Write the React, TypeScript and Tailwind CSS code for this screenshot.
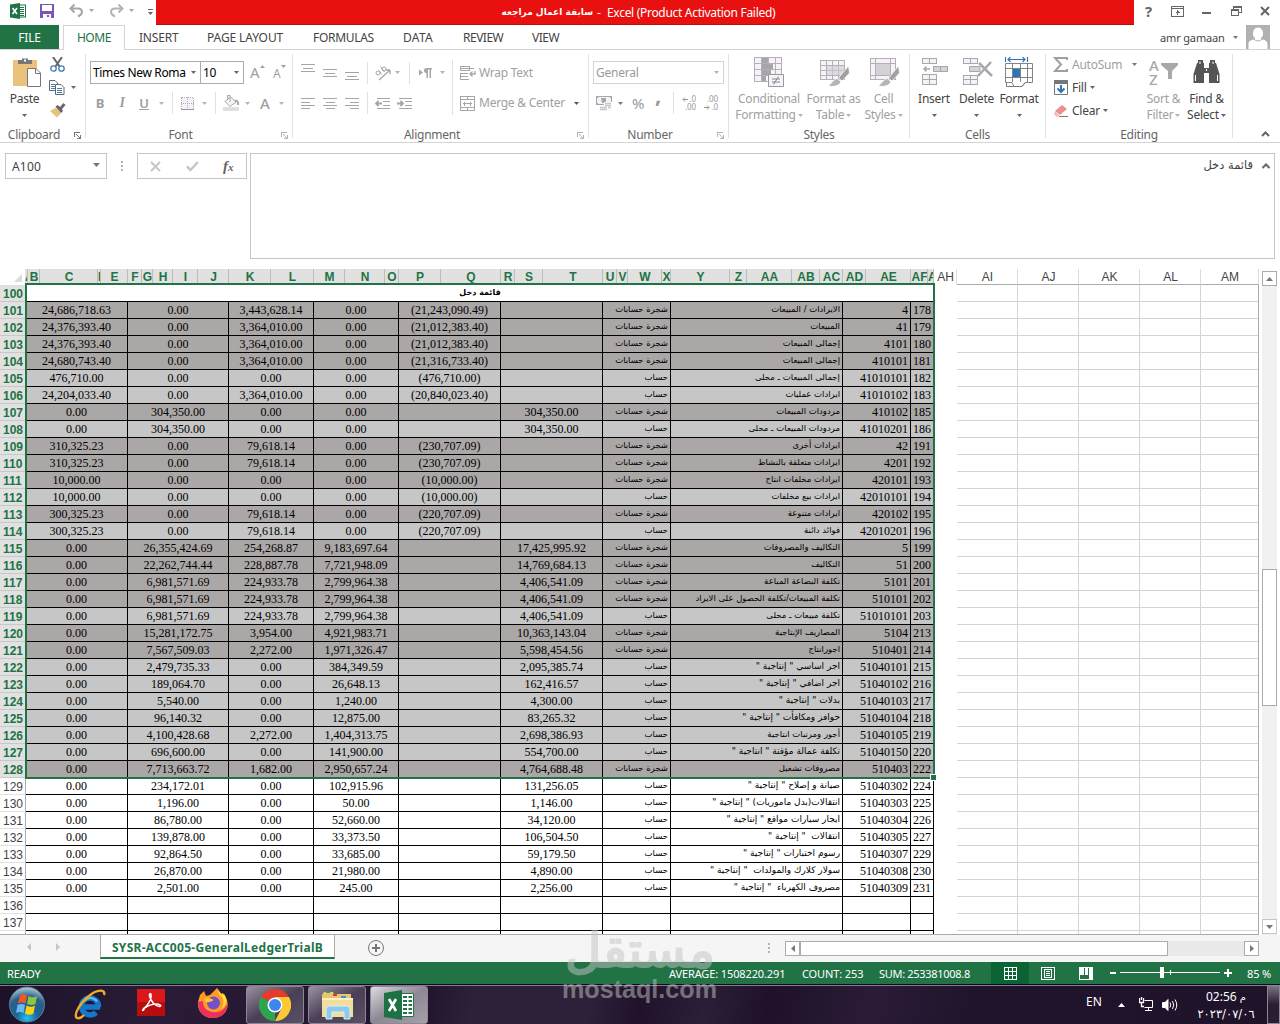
import type { ReactNode } from 'react';
import clsx from 'clsx';

type Entry = [string, string, string, string, string, string, boolean, string, string, string];

// C, H, K, M, P, T, is tree account, name, code, serial
const ENTRIES: Entry[] = [
  ['24,686,718.63', '0.00', '3,443,628.14', '0.00', '(21,243,090.49)', '', true, 'الايرادات / المبيعات', '4', '178'],
  ['24,376,393.40', '0.00', '3,364,010.00', '0.00', '(21,012,383.40)', '', true, 'المبيعات', '41', '179'],
  ['24,376,393.40', '0.00', '3,364,010.00', '0.00', '(21,012,383.40)', '', true, 'إجمالى المبيعات', '4101', '180'],
  ['24,680,743.40', '0.00', '3,364,010.00', '0.00', '(21,316,733.40)', '', true, 'إجمالى المبيعات', '410101', '181'],
  ['476,710.00', '0.00', '0.00', '0.00', '(476,710.00)', '', false, 'إجمالى المبيعات ـ محلى', '41010101', '182'],
  ['24,204,033.40', '0.00', '3,364,010.00', '0.00', '(20,840,023.40)', '', false, 'ايرادات عمليات', '41010102', '183'],
  ['0.00', '304,350.00', '0.00', '0.00', '', '304,350.00', true, 'مردودات المبيعات', '410102', '185'],
  ['0.00', '304,350.00', '0.00', '0.00', '', '304,350.00', false, 'مردودات المبيعات ـ محلى', '41010201', '186'],
  ['310,325.23', '0.00', '79,618.14', '0.00', '(230,707.09)', '', true, 'ايرادات أخرى', '42', '191'],
  ['310,325.23', '0.00', '79,618.14', '0.00', '(230,707.09)', '', true, 'ايرادات متعلقة بالنشاط', '4201', '192'],
  ['10,000.00', '0.00', '0.00', '0.00', '(10,000.00)', '', true, 'ايرادات مخلفات انتاج', '420101', '193'],
  ['10,000.00', '0.00', '0.00', '0.00', '(10,000.00)', '', false, 'ايرادات بيع مخلفات', '42010101', '194'],
  ['300,325.23', '0.00', '79,618.14', '0.00', '(220,707.09)', '', true, 'ايرادات متنوعة', '420102', '195'],
  ['300,325.23', '0.00', '79,618.14', '0.00', '(220,707.09)', '', false, 'فوائد دائنة', '42010201', '196'],
  ['0.00', '26,355,424.69', '254,268.87', '9,183,697.64', '', '17,425,995.92', true, 'التكاليف والمصروفات', '5', '199'],
  ['0.00', '22,262,744.44', '228,887.78', '7,721,948.09', '', '14,769,684.13', true, 'التكاليف', '51', '200'],
  ['0.00', '6,981,571.69', '224,933.78', '2,799,964.38', '', '4,406,541.09', true, 'تكلفة البضاعة المباعة', '5101', '201'],
  ['0.00', '6,981,571.69', '224,933.78', '2,799,964.38', '', '4,406,541.09', true, 'تكلفة المبيعات/تكلفة الحصول على الايراد', '510101', '202'],
  ['0.00', '6,981,571.69', '224,933.78', '2,799,964.38', '', '4,406,541.09', false, 'تكلفة مبيعات ـ محلى', '51010101', '203'],
  ['0.00', '15,281,172.75', '3,954.00', '4,921,983.71', '', '10,363,143.04', true, 'المصاريف الإنتاجية', '5104', '213'],
  ['0.00', '7,567,509.03', '2,272.00', '1,971,326.47', '', '5,598,454.56', true, 'اجورانتاج', '510401', '214'],
  ['0.00', '2,479,735.33', '0.00', '384,349.59', '', '2,095,385.74', false, 'اجر اساسي " إنتاجية "', '51040101', '215'],
  ['0.00', '189,064.70', '0.00', '26,648.13', '', '162,416.57', false, 'اجر اضافي " إنتاجية "', '51040102', '216'],
  ['0.00', '5,540.00', '0.00', '1,240.00', '', '4,300.00', false, 'بدلات " إنتاجية "', '51040103', '217'],
  ['0.00', '96,140.32', '0.00', '12,875.00', '', '83,265.32', false, 'حوافز ومكافأت " إنتاجية "', '51040104', '218'],
  ['0.00', '4,100,428.68', '2,272.00', '1,404,313.75', '', '2,698,386.93', false, 'أجور ومرتبات انتاجية', '51040105', '219'],
  ['0.00', '696,600.00', '0.00', '141,900.00', '', '554,700.00', false, 'تكلفة عمالة مؤقتة " انتاجية "', '51040150', '220'],
  ['0.00', '7,713,663.72', '1,682.00', '2,950,657.24', '', '4,764,688.48', true, 'مصروفات تشغيل', '510403', '222'],
  ['0.00', '234,172.01', '0.00', '102,915.96', '', '131,256.05', false, 'صيانة و إصلاح " إنتاجية "', '51040302', '224'],
  ['0.00', '1,196.00', '0.00', '50.00', '', '1,146.00', false, 'انتقالات(بدل ماموريات) " إنتاجية "', '51040303', '225'],
  ['0.00', '86,780.00', '0.00', '52,660.00', '', '34,120.00', false, 'ايجار سيارات مواقع " إنتاجية "', '51040304', '226'],
  ['0.00', '139,878.00', '0.00', '33,373.50', '', '106,504.50', false, 'انتقالات  " إنتاجية "', '51040305', '227'],
  ['0.00', '92,864.50', '0.00', '33,685.00', '', '59,179.50', false, 'رسوم اختبارات " إنتاجية "', '51040307', '229'],
  ['0.00', '26,870.00', '0.00', '21,980.00', '', '4,890.00', false, 'سولار كلارك والمولدات  " إنتاجية "', '51040308', '230'],
  ['0.00', '2,501.00', '0.00', '245.00', '', '2,256.00', false, 'مصروف الكهرباء  " إنتاجية "', '51040309', '231'],
];

const COLUMNS: [string, number][] = [
  ['A', 3], ['B', 12], ['C', 58], ['D', 3], ['E', 27], ['F', 14], ['G', 11], ['H', 20], ['I', 25], ['J', 31],
  ['K', 42], ['L', 43], ['M', 31], ['N', 40], ['O', 14], ['P', 42], ['Q', 60], ['R', 14], ['S', 28], ['T', 60],
  ['U', 14], ['V', 11], ['W', 34], ['X', 9], ['Y', 59], ['Z', 17], ['AA', 45], ['AB', 28], ['AC', 23],
  ['AD', 23], ['AE', 45], ['AF', 17], ['AG', 6], ['AH', 23], ['AI', 61], ['AJ', 61], ['AK', 61], ['AL', 61], ['AM', 58],
];

const ARABIC = 'font-["DejaVu_Sans",sans-serif]';

function Arrow({ className = 'text-[#777]' }: { className?: string }) {
  return (
    <svg width="5" height="3" viewBox="0 0 5 3" className={clsx('shrink-0', className)}>
      <path d="M0 0H5L2.500 3Z" fill="currentColor" />
    </svg>
  );
}

/* ---------- Title bar ---------- */

function ExcelMark() {
  return (
    <svg width="16" height="16" viewBox="0 0 16 16" className="ml-[10px]">
      <rect x="8" y="2" width="7.500" height="12" fill="#fff" stroke="#217346" />
      <path d="M10 4.500h4M10 6.500h4M10 8.500h4M10 10.500h4M10 12.500h4" stroke="#217346" />
      <path d="M0 1.500L10 0V16L0 14.500Z" fill="#217346" />
      <path d="M2.500 5L7 11M7 5L2.500 11" stroke="#fff" strokeWidth="1.600" />
    </svg>
  );
}

function TitleBar() {
  return (
    <div className="flex h-[25px]">
      <div className="flex w-[156px] items-start pt-[3px]">
        <ExcelMark />
        <svg width="14" height="14" viewBox="0 0 14 14" className="mt-px ml-[14px]" shapeRendering="crispEdges">
          <path d="M0 0H14V14H0Z" fill="#7a57b8" />
          <path d="M2 1H12V7H2Z" fill="#fff" />
          <path d="M3 10H11V14H3Z" fill="#fff" />
          <path d="M7 11H9V13H7Z" fill="#7a57b8" />
        </svg>
        <svg width="15" height="14" viewBox="0 0 15 14" className="mt-px ml-[15px]" fill="none" stroke="#a6a6a6" strokeWidth="2">
          <path d="M5.500 0.500L1.500 4.500L5.500 8.500M1.500 4.500H9C12 4.500 13 6.500 13 8C13 9.500 12 11 9 12.500" />
        </svg>
        <Arrow className="mt-[6px] ml-[5px] text-[#a6a6a6]" />
        <svg width="15" height="14" viewBox="0 0 15 14" className="mt-px ml-[15px]" fill="none" stroke="#b4b4b4" strokeWidth="2">
          <path d="M9.500 0.500L13.500 4.500L9.500 8.500M13.500 4.500H6C3 4.500 2 6.500 2 8C2 9.500 3 11 6 12.500" />
        </svg>
        <Arrow className="mt-[6px] ml-[5px] text-[#a6a6a6]" />
        <svg width="5" height="6" viewBox="0 0 5 6" className="mt-[6px] ml-[14px]">
          <path d="M0 0H5V1H0ZM0 3H5L2.500 6Z" fill="#666" />
        </svg>
      </div>
      <div className="flex w-[978px] items-center border-b border-[#b80f0f] bg-[#e91010] pt-px text-[12px] leading-none whitespace-pre text-white">
        <span dir="rtl" className={clsx('ml-[345px] w-[92px] text-[9px] font-bold', ARABIC)}>
          سابقة اعمال مراجعه
        </span>
        <span className="ml-[4px] w-[10px]">-</span>
        <span className="tracking-[-0.3px]">Excel (Product Activation Failed)</span>
      </div>
      <div className="flex flex-1 items-start pt-[5px] text-[#666]">
        <span className="ml-[10px] w-[9px] text-center text-[15px] leading-[12px] font-bold">?</span>
        <svg width="13" height="11" viewBox="0 0 13 11" className="mt-px ml-[18px]" fill="none" stroke="#666" shapeRendering="crispEdges">
          <path d="M0.500 0.500H12.500V10.500H0.500ZM0.500 2.500H12.500M6.500 4V9M4.500 6.500H8.500M5.500 5.500H7.500" />
        </svg>
        <svg width="9" height="2" className="mt-[7px] ml-[18px]">
          <rect width="9" height="2" fill="#666" />
        </svg>
        <svg width="11" height="10" viewBox="0 0 11 10" className="mt-px ml-[20px]" fill="none" stroke="#666" shapeRendering="crispEdges">
          <path d="M0.500 3.500H7.500V9.500H0.500ZM0.500 4.500H7.500M2.500 3V0.500H10.500V6.500H8M2.500 1.500H10.500" />
        </svg>
        <svg width="10" height="10" viewBox="0 0 10 10" className="mt-px ml-[18px]" stroke="#666" strokeWidth="2">
          <path d="M1 1L9 9M9 1L1 9" />
        </svg>
      </div>
    </div>
  );
}

/* ---------- Ribbon tabs ---------- */

function RibbonTabs() {
  return (
    <div className="flex h-[25px] border-b border-[#d4d4d4] text-[12px] leading-[26px] tracking-[-0.2px] whitespace-nowrap text-[#444]">
      <div className="w-[59px] bg-[#217346] text-center text-white">FILE</div>
      <div className="ml-[4px] h-[25px] w-[62px] border border-b-0 border-[#d4d4d4] bg-white text-center leading-[24px] tracking-[-0.4px] text-[#217346]">
        HOME
      </div>
      <div className="ml-[14px] w-[68px]">INSERT</div>
      <div className="w-[106px] tracking-[-0.1px]">PAGE LAYOUT</div>
      <div className="w-[90px] tracking-[-0.3px]">FORMULAS</div>
      <div className="w-[60px] tracking-[0.3px]">DATA</div>
      <div className="w-[69px] tracking-[-0.5px]">REVIEW</div>
      <div className="w-[628px] tracking-[-0.5px]">VIEW</div>
      <div className="w-[73px] text-[11px] tracking-[-0.15px]">amr gamaan</div>
      <div className="flex w-[13px] items-center">
        <Arrow />
      </div>
      <svg width="24" height="24" viewBox="0 0 24 24">
        <rect width="24" height="24" fill="#b1b1b1" />
        <path d="M12 2.500a5 6 0 0 1 3 10.800V14c4 1 6.500 2 6.500 5v5H2.500V19c0-3 2.500-4 6.500-5v-0.700a5 6 0 0 1 3-10.800Z" fill="#fff" />
        <path d="M7 13.500Q12 18.500 17 13.500" fill="none" stroke="#b1b1b1" />
      </svg>
    </div>
  );
}

/* ---------- Ribbon ---------- */

interface GroupProps {
  label: string;
  width: string;
  launcher?: string;
  children: ReactNode;
}

function Group({ label, width, launcher, children }: GroupProps) {
  return (
    <>
      <div className={clsx('flex h-[92px] shrink-0 flex-col', width)}>
        <div className="flex h-[76px]">{children}</div>
        <div className="flex h-[16px] items-center text-[#666]">
          <span className="flex-1 pt-px text-center">{label}</span>
          {launcher && (
            <svg width="7" height="7" viewBox="0 0 7 7" className={clsx('mt-[2px] mr-[4px] ml-[6px]', launcher)} fill="none" stroke="currentColor" shapeRendering="crispEdges">
              <path d="M0.500 5V0.500H6M2.500 2.500L6 6M6.500 3V6.500H3" />
            </svg>
          )}
        </div>
      </div>
      <div className="mt-[4px] h-[84px] w-px shrink-0 bg-[#e1e1e1]" />
    </>
  );
}

interface BigButtonProps {
  width: string;
  icon: ReactNode;
  lines: string[];
  muted?: boolean;
  inlineArrow?: boolean;
}

function BigButton({ width, icon, lines, muted, inlineArrow }: BigButtonProps) {
  return (
    <div className={clsx('flex shrink-0 flex-col items-center pt-[7px] leading-[16px] whitespace-nowrap', width, muted ? 'text-[#a0a0a0]' : 'text-[#444]')}>
      <div className="flex h-[34px] items-start">{icon}</div>
      <span>{lines[0]}</span>
      <span className="flex h-[16px] items-center gap-[2px]">
        {inlineArrow && lines[1]}
        <Arrow className={muted ? 'text-[#b4b4b4]' : 'text-[#666]'} />
      </span>
    </div>
  );
}

const Divider = ({ className }: { className: string }) => <div className={clsx('w-px shrink-0 bg-[#e1e1e1]', className)} />;

const ALIGN = [
  'M0 0.500H14M2 4.500H12M0 7.500H14',
  'M0 0.500H14M0 4.500H9M0 7.500H14M0 10.500H9',
  'M0 0.500H14M2.500 4.500H11.500M0 7.500H14M2.500 10.500H11.500',
  'M0 0.500H14M5 4.500H14M0 7.500H14M5 10.500H14',
];

function AlignIcon({ d, className }: { d: string; className?: string }) {
  return (
    <svg width="14" height="11" viewBox="0 0 14 11" className={clsx('shrink-0', className)} stroke="#a6a6a6" shapeRendering="crispEdges">
      <path d={d} />
    </svg>
  );
}

function IndentIcon({ right, className }: { right?: boolean; className?: string }) {
  return (
    <svg width="16" height="11" viewBox="0 0 16 11" className={clsx('shrink-0', className)} stroke="#a6a6a6" fill="none">
      <path d="M2 0.500H15M8 3.500H15M8 7.500H15M2 10.500H15" shapeRendering="crispEdges" />
      <path d={right ? 'M0 5.500H6M3.500 3L6 5.500L3.500 8' : 'M7 5.500H1M3.500 3L1 5.500L3.500 8'} strokeWidth="1.800" />
    </svg>
  );
}

function ClipboardGroup() {
  return (
    <Group label="Clipboard" width="w-[85px]" launcher="text-[#777]">
      <BigButton
        width="w-[49px]"
        lines={['Paste']}
        icon={
          <svg width="28" height="31" viewBox="0 0 28 31" className="ml-[4px]">
            <path d="M0 3H24V29H0Z" fill="#eac17d" />
            <path d="M5 3H9V1.500H15V3H19V7H5Z" fill="#777" />
            <path d="M11 2.500H13V4.500H11Z" fill="#fff" />
            <path d="M14.500 11.500H23L27.500 16V29.500H14.500Z" fill="#fff" stroke="#777" />
            <path d="M22.500 11.500V16.500H27.500" fill="none" stroke="#777" />
          </svg>
        }
      />
      <div className="flex flex-col">
        <svg width="15" height="15" viewBox="0 0 15 15" className="mt-[7px] ml-px" fill="none">
          <path d="M3 0L9.500 9.500M12 0L5.500 9.500" stroke="#666" strokeWidth="2" />
          <circle cx="3.500" cy="11.500" r="2.700" stroke="#3f7fb5" strokeWidth="1.300" />
          <circle cx="11.500" cy="11.500" r="2.700" stroke="#3f7fb5" strokeWidth="1.300" />
        </svg>
        <div className="mt-[8px] flex items-center">
          <svg width="16" height="15" viewBox="0 0 16 15" fill="#fff" stroke="#666">
            <path d="M0.500 0.500H6L8.500 3V10.500H0.500Z" />
            <path d="M2 4.500H6M2 6.500H6M2 8.500H6" stroke="#3f7fb5" />
            <path d="M6.500 4.500H12L15 7.500V14.500H6.500Z" />
            <path d="M8 8.500H13M8 10.500H13M8 12.500H13" stroke="#3f7fb5" />
          </svg>
          <Arrow className="ml-[6px] text-[#666]" />
        </div>
        <svg width="17" height="16" viewBox="0 0 17 16" className="mt-[7px]">
          <path d="M1 9L7 5.500L12 11L8 15.500Z" fill="#eac17d" />
          <path d="M6.500 4.500L8.500 3L11 5L14.500 1L16.500 3L13 7L14 9L12 11Z" fill="#666" />
        </svg>
      </div>
    </Group>
  );
}

function FontGroup() {
  return (
    <Group label="Font" width="w-[206px]" launcher="text-[#b4b4b4]">
      <div className="pt-[11px] pl-[4px] text-[#a0a0a0]">
        <div className="flex h-[23px] items-center">
          <div className="flex h-[23px] w-[111px] items-center justify-between border border-[#ababab] pr-[4px] pl-[2px] tracking-[-0.35px] whitespace-nowrap text-black">
            <span>Times New Roma</span>
            <Arrow className="text-[#666]" />
          </div>
          <div className="flex h-[23px] w-[43px] items-center justify-between border border-l-0 border-[#ababab] pr-[4px] pl-[2px] text-black">
            10
            <Arrow className="text-[#666]" />
          </div>
          <span className="ml-[6px] w-[10px] text-[15px]">A</span>
          <svg width="5" height="3" viewBox="0 0 5 3" className="mb-[12px]">
            <path d="M0 3H5L2.500 0Z" fill="#a0a0a0" />
          </svg>
          <span className="ml-[8px] w-[8px] pt-[2px] text-[12px]">A</span>
          <Arrow className="mb-[12px] text-[#a0a0a0]" />
        </div>
        <div className="mt-[8px] flex h-[22px] items-center">
          <span className="w-[20px] text-center text-[13px] font-bold">B</span>
          <span className="ml-[2px] w-[20px] text-center font-['Liberation_Serif',serif] text-[14px] font-bold italic">I</span>
          <span className="ml-[2px] w-[20px] text-center text-[13px] font-semibold underline">U</span>
          <Arrow className="ml-[5px] text-[#b4b4b4]" />
          <Divider className="ml-[8px] h-[22px]" />
          <svg width="13" height="13" viewBox="0 0 13 13" className="ml-[8px]" stroke="#b0a8b4" fill="#f7f1f9" shapeRendering="crispEdges">
            <path d="M0.500 0.500H12.500V12H0.500ZM6.500 0V12M0 6.500H13" strokeDasharray="1 1" />
            <path d="M0 12.500H13" stroke="#999" />
          </svg>
          <Arrow className="ml-[8px] text-[#b4b4b4]" />
          <Divider className="ml-[8px] h-[22px]" />
          <svg width="17" height="16" viewBox="0 0 17 16" className="ml-[7px]" fill="none" stroke="#a6a6a6">
            <path d="M7.500 2L13 7L7 11.500L2 6.500ZM7 7V0.500H4.500V5" fill="#f7f1f9" />
            <path d="M12 5.500C14.500 5.500 15.500 7.500 15 10" strokeWidth="2" />
            <path d="M0 14H16" stroke="#dfdfdf" strokeWidth="4" />
          </svg>
          <Arrow className="ml-[5px] text-[#b4b4b4]" />
          <span className="ml-[10px] w-[11px] text-[15px] font-medium">A</span>
          <Arrow className="ml-[8px] text-[#b4b4b4]" />
        </div>
      </div>
    </Group>
  );
}

function AlignmentGroup() {
  return (
    <Group label="Alignment" width="w-[295px]" launcher="text-[#b4b4b4]">
      <div className="w-[159px] pt-[11px] pl-[8px]">
        <div className="flex h-[23px] items-center">
          <AlignIcon d={ALIGN[0]} className="mb-[6px]" />
          <AlignIcon d={ALIGN[0]} className="mt-[3px] ml-[8px]" />
          <AlignIcon d={ALIGN[0]} className="mt-[10px] ml-[8px]" />
          <Divider className="ml-[8px] h-[22px]" />
          <svg width="17" height="16" viewBox="0 0 17 16" className="ml-[7px]" fill="none" stroke="#a6a6a6">
            <path d="M4 15L15 5M15 5V9M15 5H11" strokeWidth="1.300" />
            <circle cx="3" cy="8" r="2" />
            <path d="M4 5.500L6.500 9.500M5.500 1.500L9.500 7" />
            <circle cx="9" cy="4" r="2" />
          </svg>
          <Arrow className="ml-[3px] text-[#b4b4b4]" />
          <Divider className="ml-[9px] h-[22px]" />
          <svg width="14" height="10" viewBox="0 0 14 10" className="ml-[9px]">
            <path d="M0 1.500L4 4.500L0 7.500ZM13 0H7.500a2.500 2.500 0 0 0 0 5V10H9V1.500H10.500V10H12V1.500H13Z" fill="#a6a6a6" />
          </svg>
          <Arrow className="ml-[7px] text-[#b4b4b4]" />
        </div>
        <div className="mt-[8px] flex h-[22px] items-center">
          <AlignIcon d={ALIGN[1]} />
          <AlignIcon d={ALIGN[2]} className="ml-[8px]" />
          <AlignIcon d={ALIGN[3]} className="ml-[8px]" />
          <Divider className="ml-[8px] h-[22px]" />
          <IndentIcon className="ml-[7px]" />
          <IndentIcon right className="ml-[6px]" />
        </div>
      </div>
      <Divider className="mt-[10px] h-[55px]" />
      <div className="pt-[11px] pl-[7px] whitespace-nowrap text-[#a0a0a0]">
        <div className="flex h-[23px] items-center">
          <svg width="16" height="16" viewBox="0 0 16 16" fill="none" stroke="#a6a6a6">
            <path d="M0.500 1.500H9.500V5.500H0.500ZM0 3.500H14M0 8.500H8M0 11.500H8M0 14.500H9M0.500 8V15" shapeRendering="crispEdges" />
            <path d="M15 6V9H10.500M12.500 6.500L10 9L12.500 11.500" strokeWidth="1.300" />
          </svg>
          <span className="ml-[3px]">Wrap Text</span>
        </div>
        <div className="mt-[8px] flex h-[22px] items-center">
          <svg width="15" height="15" viewBox="0 0 15 15" fill="none" stroke="#a6a6a6" shapeRendering="crispEdges">
            <path d="M0.500 0.500H14.500V14.500H0.500ZM0 3.500H15M0 11.500H15M7.500 0V3M7.500 12V15M3 7.500H12M4.500 5.500V9.500M10.500 5.500V9.500" />
          </svg>
          <span className="ml-[4px] w-[95px]">Merge &amp; Center</span>
          <Arrow className="text-[#555]" />
        </div>
      </div>
    </Group>
  );
}

function DecimalIcon({ top, bottom, flip, className }: { top: string; bottom: string; flip?: boolean; className: string }) {
  return (
    <div className={clsx('flex w-[15px] shrink-0 flex-col text-[8px] leading-[8px] tracking-[-0.1px]', className)}>
      <span className="flex items-center justify-end gap-px">
        {!flip && (
          <svg width="6" height="5" viewBox="0 0 6 5" fill="none" stroke="#999">
            <path d="M6 2.500H1M3 0.500L1 2.500L3 4.500" />
          </svg>
        )}
        {top}
      </span>
      <span className="flex items-center justify-end gap-px">
        {flip && (
          <svg width="6" height="5" viewBox="0 0 6 5" fill="none" stroke="#999">
            <path d="M0 2.500H5M3 0.500L5 2.500L3 4.500" />
          </svg>
        )}
        {bottom}
      </span>
    </div>
  );
}

function NumberGroup() {
  return (
    <Group label="Number" width="w-[139px]" launcher="text-[#b4b4b4]">
      <div className="pt-[11px] pl-[4px] text-[#999]">
        <div className="flex h-[23px] w-[131px] items-center justify-between border border-[#d4d4d4] pr-[4px] pl-[2px]">
          General
          <Arrow className="text-[#b4b4b4]" />
        </div>
        <div className="mt-[8px] flex h-[22px] items-center">
          <svg width="16" height="15" viewBox="0 0 16 15" className="ml-[3px]">
            <rect x="0.500" y="0.500" width="15" height="8" fill="#f7f1f9" stroke="#a6a6a6" />
            <path d="M0 0H4L0 3ZM16 0H12L16 3ZM0 9H4L0 6ZM5 2H10V7H6Z" fill="#a6a6a6" />
            <path d="M8 6H16V15H4V10H8Z" fill="#fff" />
            <path d="M9 7.500H15M9 9.500H15M4 11.500H11M12 11.500H15M4 13.500H11" stroke="#c8c4ca" strokeWidth="1.500" />
          </svg>
          <Arrow className="ml-[6px] text-[#777]" />
          <span className="ml-[9px] w-[14px] text-[15px]">%</span>
          <span className="ml-[9px] w-[7px] pb-[18px] text-[22px] leading-[10px] font-bold">,</span>
          <Divider className="ml-[11px] h-[22px]" />
          <DecimalIcon top=".0" bottom=".00" className="ml-[7px]" />
          <DecimalIcon top=".00" bottom=".0" flip className="ml-[7px]" />
        </div>
      </div>
    </Group>
  );
}

const BRUSH = (
  <g>
    <path d="M28.500 9L29.500 16L22 24L18.500 21Z" fill="#a0a0a0" stroke="#fff" strokeWidth="0.700" />
    <path d="M17.500 21.500L21 25C19 29 14 30 8 29C11 28 12 23 17.500 21.500Z" fill="#b6b3b8" stroke="#fff" strokeWidth="0.700" />
  </g>
);

function StylesGroup() {
  return (
    <Group label="Styles" width="w-[180px]">
      <BigButton
        width="w-[80px]"
        muted
        inlineArrow
        lines={['Conditional', 'Formatting']}
        icon={
          <svg width="30" height="31" viewBox="0 0 30 31" fill="#f7f1f9" stroke="#b4b0b6">
            <path d="M0.500 0.500H27.500V24.500H0.500ZM0 6.500H28M0 12.500H28M0 18.500H28M7.500 0V24M14.500 0V24M21.500 0V24" shapeRendering="crispEdges" />
            <path d="M8 1H14V6H8ZM8 7H19V12H8ZM8 13H17V18H8ZM8 19H12V24H8Z" fill="#a8a5aa" stroke="none" />
            <path d="M14.500 17.500H29.500V29.500H14.500Z" stroke="#999" />
            <path d="M18 22H26M18 25H26M24.500 19.500L19.500 27.500" stroke="#888" />
          </svg>
        }
      />
      <BigButton
        width="w-[49px]"
        muted
        inlineArrow
        lines={['Format as', 'Table']}
        icon={
          <svg width="30" height="31" viewBox="0 0 30 31" fill="#f7f1f9" stroke="#b4b0b6" className="ml-[3px]">
            <path d="M0.500 3.500H24.500V22.500H0.500ZM0 8.500H25M0 13.500H25M0 18.500H25M6.500 3V23M12.500 3V23M18.500 3V23" shapeRendering="crispEdges" />
            <path d="M7 9H24V18H7Z" fill="#cfccd1" fillOpacity="0.600" stroke="none" />
            {BRUSH}
          </svg>
        }
      />
      <BigButton
        width="w-[51px]"
        muted
        inlineArrow
        lines={['Cell', 'Styles']}
        icon={
          <svg width="30" height="31" viewBox="0 0 30 31" fill="#f7f1f9" stroke="#b4b0b6" className="ml-[3px]">
            <path d="M0.500 1.500H25.500V22.500H0.500ZM0 6.500H26M0 18.500H26M5.500 1V23M20.500 1V23" shapeRendering="crispEdges" />
            <path d="M6 7H20V18H6Z" fill="#d4d2d6" stroke="none" />
            {BRUSH}
          </svg>
        }
      />
    </Group>
  );
}

function CellsGroup() {
  return (
    <Group label="Cells" width="w-[135px]">
      <BigButton
        width="w-[48px]"
        lines={['Insert']}
        icon={
          <svg width="27" height="31" viewBox="0 0 27 31" fill="#f7f1f9" stroke="#aaa7ac" className="ml-[3px]" shapeRendering="crispEdges">
            <path d="M0.500 1.500H14.500V6.500H0.500ZM7.500 1V6M0.500 17.500H14.500V27.500H0.500ZM7.500 17V28M0 22.500H15" />
            <path d="M11.500 9.500H25.500V14.500H11.500ZM18.500 9V15" fill="#d4d2d6" />
            <path d="M8 12H2M4.500 9.500L2 12L4.500 14.500" fill="none" strokeWidth="1.500" shapeRendering="auto" />
          </svg>
        }
      />
      <BigButton
        width="w-[37px]"
        lines={['Delete']}
        icon={
          <svg width="30" height="31" viewBox="0 0 30 31" fill="#f7f1f9" stroke="#aaa7ac" className="ml-[3px]">
            <path d="M0.500 1.500H14.500V6.500H0.500ZM7.500 1V6M0.500 18.500H14.500V27.500H0.500ZM7.500 18V28M0 22.500H15" shapeRendering="crispEdges" />
            <path d="M6.500 9.500H17V14.500H6.500Z" fill="#d4d2d6" />
            <path d="M16 6L29 19M28 5L15 19" strokeWidth="2.500" />
          </svg>
        }
      />
      <BigButton
        width="w-[48px]"
        lines={['Format']}
        icon={
          <svg width="29" height="31" viewBox="0 0 29 31" fill="#fff" stroke="#777">
            <path d="M0.500 6.500H27.500V25.500H20L17 29.500H9L7 25.500H0.500ZM0 11.500H28M0 20.500H28M7.500 6V25M15.500 6V25M22.500 6V25" strokeWidth="0.900" />
            <path d="M1.500 26V29.500H17L20 26" fill="none" />
            <path d="M8 12H15V20H8Z" fill="#2e75b5" stroke="none" />
            <path d="M0.500 0V5M22.500 0V5M3 2.500H20M5.500 0L3 2.500L5.500 5M17.500 0L20 2.500L17.500 5" fill="none" stroke="#2e75b5" strokeWidth="1.200" />
          </svg>
        }
      />
    </Group>
  );
}

function EditingGroup() {
  return (
    <Group label="Editing" width="w-[186px]">
      <div className="w-[95px] pt-[3px] pl-[7px] whitespace-nowrap text-[#444]">
        <div className="flex h-[23px] items-center text-[#a0a0a0]">
          <svg width="15" height="15" viewBox="0 0 15 15" fill="none" stroke="#a0a0a0" strokeWidth="2">
            <path d="M14 3V1H2L8 7.500L2 14H14V12" />
          </svg>
          <span className="ml-[4px] w-[60px]">AutoSum</span>
          <Arrow className="text-[#777]" />
        </div>
        <div className="flex h-[23px] items-center">
          <svg width="14" height="15" viewBox="0 0 14 15" className="mx-px">
            <path d="M0.500 0.500H13.500V14.500H0.500Z" fill="#fff" stroke="#777" />
            <path d="M0 0H14V4H0Z" fill="#777" />
            <path d="M7 5V12M3.500 8.500L7 12L10.500 8.500" fill="none" stroke="#2e75b5" strokeWidth="2" />
          </svg>
          <span className="mr-[3px] ml-[3px]">Fill</span>
          <Arrow className="text-[#666]" />
        </div>
        <div className="flex h-[23px] items-center">
          <svg width="14" height="14" viewBox="0 0 14 14" className="mx-px">
            <path d="M8 1L13 5L6 11L1 7Z" fill="#ec8f92" />
            <path d="M1 7.500L5.500 11.500L4 12.500H2L0 10Z" fill="#f3b5b6" />
            <path d="M5 12.500H14" stroke="#777" />
          </svg>
          <span className="mr-[3px] ml-[3px]">Clear</span>
          <Arrow className="text-[#666]" />
        </div>
      </div>
      <BigButton
        width="w-[45px]"
        muted
        inlineArrow
        lines={['Sort &', 'Filter']}
        icon={
          <div className="flex items-center text-[#a8a8a8]">
            <div className="w-[12px] pt-px text-[15px] leading-[14px] font-medium">
              A<br />Z
            </div>
            <svg width="17" height="17" viewBox="0 0 17 17">
              <path d="M0 0H17V2L11 8V16H7V8L0 2Z" fill="#a8a8a8" />
            </svg>
          </div>
        }
      />
      <BigButton
        width="w-[41px]"
        inlineArrow
        lines={['Find &', 'Select']}
        icon={
          <svg width="27" height="24" viewBox="0 0 27 24" className="mt-[3px]" fill="#555">
            <path d="M5 0H10V3H11V8H16V3H17V0H22V3H23L26.500 14V23H16V13H11V23H0.500V14L4 3H5Z" />
            <path d="M2.500 15V21M24.500 15V21M7 1.500V4M20 1.500V4M13.500 9V11" stroke="#fff" />
          </svg>
        }
      />
    </Group>
  );
}

function Ribbon() {
  return (
    <div className="flex h-[93px] border-b border-[#d4d4d4] text-[12px] leading-none tracking-[-0.25px]">
      <ClipboardGroup />
      <FontGroup />
      <AlignmentGroup />
      <NumberGroup />
      <StylesGroup />
      <CellsGroup />
      <EditingGroup />
      <svg width="9" height="6" viewBox="0 0 9 6" className="mt-[81px] ml-[28px]" fill="none" stroke="#666" strokeWidth="2">
        <path d="M1 5L4.500 1.500L8 5" />
      </svg>
    </div>
  );
}

/* ---------- Formula bar ---------- */

function FormulaBar() {
  return (
    <div className="flex h-[126px] items-start pt-[10px] text-[12px] leading-none text-[#444]">
      <div className="ml-[5px] flex h-[26px] w-[102px] items-center justify-between border border-[#c6c6c6] pt-px pr-[6px] pl-[6px]">
        <span className="tracking-[0.2px]">A100</span>
        <svg width="7" height="4" viewBox="0 0 7 4" className="mb-[3px]">
          <path d="M0 0H7L3.500 4Z" fill="#777" />
        </svg>
      </div>
      <svg width="2" height="10" viewBox="0 0 2 10" className="mt-[8px] ml-[14px]">
        <path d="M0 0H2V2H0ZM0 4H2V6H0ZM0 8H2V10H0Z" fill="#b4b4b4" />
      </svg>
      <div className="ml-[14px] flex h-[26px] w-[110px] items-center border border-[#c6c6c6]">
        <svg width="11" height="11" viewBox="0 0 11 11" className="ml-[12px]" stroke="#c6c6c6" strokeWidth="2">
          <path d="M1 1L10 10M10 1L1 10" />
        </svg>
        <svg width="13" height="11" viewBox="0 0 13 11" className="ml-[25px]" fill="none" stroke="#c6c6c6" strokeWidth="2.500">
          <path d="M1 5.500L4.500 9L12 1" />
        </svg>
        <span className="ml-[24px] font-['Liberation_Serif',serif] text-[15px] font-bold text-[#666] italic">
          f<span className="text-[11px]">x</span>
        </span>
      </div>
      <div className="ml-[3px] flex h-[106px] w-[1025px] items-start justify-end border border-[#c6c6c6] pr-[4px]">
        <span dir="rtl" className={clsx('mt-[6px] text-[11.500px]', ARABIC)}>
          قائمة دخل
        </span>
        <svg width="8" height="6" viewBox="0 0 8 6" className="mt-[9px] ml-[9px]" fill="none" stroke="#666" strokeWidth="2">
          <path d="M0.500 5L4 1.500L7.500 5" />
        </svg>
      </div>
    </div>
  );
}

/* ---------- Worksheet ---------- */

function ColumnHeaders() {
  return (
    <div className="flex h-[16px] font-['Liberation_Sans',sans-serif] text-[12px] leading-[17px]">
      <div className="flex w-[25px] items-end justify-end pr-[3px] pb-[3px]">
        <svg width="8" height="8" viewBox="0 0 8 8">
          <path d="M8 0V8H0Z" fill="#dadada" />
        </svg>
      </div>
      {COLUMNS.map(([name, width], i) => (
        <div
          key={name}
          className={clsx(
            'flex shrink-0 overflow-hidden border-r',
            width < 8 ? 'justify-start' : 'justify-center pl-px',
            i < 33 ? 'border-[#bdbdbd] bg-[#e1e1e1] font-bold text-[#217346]' : 'border-b border-[#dcdcdc] border-b-[#ababab] text-[#444]',
            i === 33 && 'border-b-white',
          )}
          style={{ width }}
        >
          <span>{name}</span>
        </div>
      ))}
    </div>
  );
}

function RowHeader({ row }: { row: number }) {
  return (
    <div
      className={clsx(
        'w-[26px] shrink-0 overflow-hidden border-r border-b pl-[3px] font-["Liberation_Sans",sans-serif] text-[12px] leading-[19px]',
        row <= 128 ? 'border-[#c8c8c8] bg-[#e1e1e1] font-bold text-[#217346]' : 'border-[#e1e1e1] border-r-[#ababab] text-[#444]',
      )}
    >
      {row <= 137 && row}
    </div>
  );
}

function GridTail() {
  return (
    <>
      <div className="w-[23px] shrink-0" />
      {['AI', 'AJ', 'AK', 'AL'].map((c) => (
        <div key={c} className="w-[61px] shrink-0 border-r border-b border-[#d4d4d4]" />
      ))}
      <div className="w-[57px] shrink-0 border-b border-[#d4d4d4]" />
    </>
  );
}

const NUM = 'shrink-0 border-r border-b border-black text-center';
const TEXT = 'shrink-0 border-r border-b border-black pr-[2px] text-right';

function EntryRow({ row, entry }: { row: number; entry?: Entry }) {
  const [c, h, k, m, p, t, tree, name, code, serial] = entry ?? ['', '', '', '', '', '', false, '', '', ''];
  const selected = row <= 128;
  return (
    <div className="flex h-[17px] shrink-0">
      <RowHeader row={row} />
      <div className={clsx('flex shrink-0 text-[12px] leading-[17px] whitespace-pre text-black', selected && (tree ? 'bg-[#aba7a6]' : 'bg-[#c6c6c6]'))}>
        <div className={clsx(NUM, 'w-[102px]')}>{c}</div>
        <div className={clsx(NUM, 'w-[101px]')}>{h}</div>
        <div className={clsx(NUM, 'w-[85px]')}>{k}</div>
        <div className={clsx(NUM, 'w-[85px]')}>{m}</div>
        <div className={clsx(NUM, 'w-[102px]')}>{p}</div>
        <div className={clsx(NUM, 'w-[102px]')}>{t}</div>
        <div dir="rtl" className={clsx(TEXT, 'w-[68px] text-[8.500px] leading-[14px]', ARABIC)}>
          {entry && (tree ? 'شجرة حسابات' : 'حساب')}
        </div>
        <div dir="rtl" className={clsx(TEXT, 'w-[172px] leading-[14px]', ARABIC, name.includes('"') ? 'text-[9px]' : 'text-[8.500px]')}>
          {name}
        </div>
        <div className={clsx(TEXT, 'w-[68px] leading-[16px]')}>{code}</div>
        <div className={clsx(TEXT, 'w-[23px] leading-[16px]')}>{serial}</div>
      </div>
      <GridTail />
    </div>
  );
}

function Worksheet() {
  const rows = Array.from({ length: 38 }, (_, i) => 101 + i);
  return (
    <div className="flex h-[666px]">
      <div className="relative w-[1259px] shrink-0 overflow-hidden border-b border-[#ababab]">
        <ColumnHeaders />
        <div className="flex h-[649px] flex-col border-r border-[#ababab] font-['Liberation_Serif',serif]">
          <div className="flex h-[17px] shrink-0">
            <RowHeader row={100} />
            <div dir="rtl" className={clsx('w-[908px] shrink-0 border-b border-black text-center text-[8px] leading-[15px] font-bold', ARABIC)}>
              قائمة دخل
            </div>
            <GridTail />
          </div>
          {rows.map((row) => (
            <EntryRow key={row} row={row} entry={ENTRIES[row - 101]} />
          ))}
        </div>
        {/* Selection outline and fill handle */}
        <div className="absolute top-[14px] left-[25px] h-[496px] w-[910px] border-2 border-[#217346]" />
        <div className="absolute top-[505px] left-[930px] h-[7px] w-[7px] border border-white bg-[#217346]" />
      </div>
      <div className="mt-[2px] ml-[3px] flex w-[15px] flex-col bg-[#f1f1f1]">
        <div className="flex h-[15px] items-center justify-center border border-[#ababab] bg-white">
          <svg width="7" height="4" viewBox="0 0 7 4">
            <path d="M0 4H7L3.500 0Z" fill="#777" />
          </svg>
        </div>
        <div className="mt-[283px] h-[137px] border border-[#ababab] bg-white" />
        <div className="mt-auto mb-px flex h-[15px] items-center justify-center border border-[#c6c6c6] bg-white">
          <svg width="7" height="4" viewBox="0 0 7 4">
            <path d="M0 0H7L3.500 4Z" fill="#777" />
          </svg>
        </div>
      </div>
    </div>
  );
}

function SheetTabs() {
  return (
    <div className="flex h-[27px] items-start bg-[#f5f5f5]">
      <svg width="4" height="8" viewBox="0 0 4 8" className="mt-[8px] ml-[27px]">
        <path d="M4 0V8L0 4Z" fill="#c6c6c6" />
      </svg>
      <svg width="4" height="8" viewBox="0 0 4 8" className="mt-[8px] ml-[25px]">
        <path d="M0 0V8L4 4Z" fill="#c6c6c6" />
      </svg>
      <div className="-mt-px ml-[40px] h-[25px] w-[235px] border-x border-b-2 border-x-[#ababab] border-b-[#217346] bg-white text-center text-[12px] leading-[27px] font-bold tracking-[0.28px] whitespace-nowrap text-[#217346]">
        SYSR-ACC005-GeneralLedgerTrialB
      </div>
      <svg width="16" height="16" viewBox="0 0 16 16" className="mt-[5px] ml-[33px]" fill="none" stroke="#777">
        <circle cx="8" cy="8" r="7.500" />
        <path d="M4 8H12M8 4V12" strokeWidth="2" />
      </svg>
      <svg width="2" height="10" viewBox="0 0 2 10" className="mt-[8px] ml-[384px]">
        <path d="M0 0H2V2H0ZM0 4H2V6H0ZM0 8H2V10H0Z" fill="#b4b4b4" />
      </svg>
      <div className="mt-[6px] ml-[15px] flex h-[15px] w-[474px] bg-[#e9e9e9]">
        <div className="flex w-[15px] items-center justify-center border border-[#ababab] bg-white">
          <svg width="4" height="7" viewBox="0 0 4 7">
            <path d="M4 0V7L0 3.500Z" fill="#777" />
          </svg>
        </div>
        <div className="w-[368px] border border-[#ababab] bg-white" />
        <div className="ml-auto flex w-[15px] items-center justify-center border border-[#ababab] bg-white">
          <svg width="4" height="7" viewBox="0 0 4 7">
            <path d="M0 0V7L4 3.500Z" fill="#777" />
          </svg>
        </div>
      </div>
    </div>
  );
}

function StatusBar() {
  return (
    <div className="flex h-[22px] items-center bg-[#217346] text-[11px] leading-none tracking-[-0.12px] whitespace-nowrap text-white">
      <span className="ml-[7px] w-[662px]">READY</span>
      <span className="w-[133px]">AVERAGE: 1508220.291</span>
      <span className="w-[77px]">COUNT: 253</span>
      <span className="w-[112px] tracking-[-0.3px]">SUM: 253381008.8</span>
      <div className="flex h-[22px] w-[38px] items-center justify-center bg-[#0a6332]">
        <svg width="13" height="13" viewBox="0 0 13 13" fill="none" stroke="#fff" shapeRendering="crispEdges">
          <path d="M0.500 0.500H12.500V12.500H0.500ZM4.500 0V13M8.500 0V13M0 4.500H13M0 8.500H13" />
        </svg>
      </div>
      <svg width="14" height="13" viewBox="0 0 14 13" className="ml-[12px]" fill="none" stroke="#fff" shapeRendering="crispEdges">
        <path d="M0.500 0.500H13.500V12.500H0.500ZM3.500 2.500H10.500V10.500H3.500ZM5 4.500H9M5 6.500H9M5 8.500H9" />
      </svg>
      <svg width="14" height="13" viewBox="0 0 14 13" className="ml-[24px]" shapeRendering="crispEdges">
        <path d="M0.500 0.500H13.500V12.500H0.500Z" fill="none" stroke="#fff" />
        <path d="M1 1H5V8H1ZM6 1H9V8H6ZM10 1H13V12H10Z" fill="#fff" />
      </svg>
      <svg width="6" height="2" className="ml-[17px]">
        <rect width="6" height="2" fill="#fff" />
      </svg>
      <svg width="100" height="12" viewBox="0 0 100 12" className="ml-[4px]" shapeRendering="crispEdges">
        <path d="M0 5H100V6H0ZM40 0H44V11H40ZM50 3H51V8H50Z" fill="#fff" />
      </svg>
      <svg width="8" height="8" viewBox="0 0 8 8" className="ml-[4px]">
        <path d="M3 0H5V3H8V5H5V8H3V5H0V3H3Z" fill="#fff" />
      </svg>
      <span className="ml-[15px]">85 %</span>
    </div>
  );
}

/* ---------- Taskbar ---------- */

function TaskButton({ className, children }: { className: string; children: ReactNode }) {
  return (
    <div className={clsx('flex h-[38px] w-[58px] shrink-0 items-center justify-center rounded-[3px] border border-[#8b8794] bg-linear-to-br', className)}>
      {children}
    </div>
  );
}

function Taskbar() {
  return (
    <div className="flex h-[40px] items-start border-t border-[#120a1c] bg-[linear-gradient(100deg,#1d1128_0%,#2a1c38_12%,#20132b_33%,#2d2039_37%,#2d2039_46%,#1f122a_50%,#2b1e37_55%,#1e1129_60%,#2a1c36_68%,#20132c_76%,#1f132a_100%)] text-white shadow-[inset_0_1px_0_#857c8e]">
      <svg width="38" height="38" viewBox="0 0 38 38" className="mt-px ml-[8px]">
        <defs>
          <radialGradient id="orb" cx="50%" cy="90%" r="90%">
            <stop offset="0" stopColor="#22c3f4" />
            <stop offset="0.350" stopColor="#1b6398" />
            <stop offset="0.700" stopColor="#2c5f88" />
            <stop offset="1" stopColor="#b5d0de" />
          </radialGradient>
        </defs>
        <circle cx="19" cy="18.500" r="17.500" fill="url(#orb)" stroke="#5d7b91" />
        <path d="M12 9.500Q15.500 7 19 9.500L17.500 17.500Q13.500 15.500 10 17.500Z" fill="#ef5a24" />
        <path d="M20.500 10Q25 12.500 29 10L27.500 18Q24 20 19 18Z" fill="#8dc63f" />
        <path d="M9.500 19Q13.500 17 17 19L15.500 27Q11.500 25 8 27Z" fill="#6db8ec" />
        <path d="M18.500 19.500Q23 22 27 19.500L25.500 27.500Q21.500 30 17 27.500Z" fill="#fcd20b" />
      </svg>
      <svg width="34" height="34" viewBox="0 0 34 34" className="mt-[3px] ml-[27px]" fill="none">
        <path d="M27 19H11M25.500 19A8.500 8.500 0 1 0 23 24.500" stroke="#1676c8" strokeWidth="5.500" />
        <path d="M12 12.500A7.500 7.500 0 0 1 24 13.500" stroke="#63bdf0" strokeWidth="2" />
        <path d="M31 7C33 1 24 1 16 8C7 15 0 27 4 30C6 31 9 29 11 27" stroke="#f0ab20" strokeWidth="2.400" />
      </svg>
      <svg width="28" height="27" viewBox="0 0 28 27" className="mt-[4px] ml-[30px]" fill="none">
        <rect width="28" height="27" fill="#b80d0d" />
        <path d="M0 0H28V13H0Z" fill="#dc1717" />
        <path d="M6 20C10 18 15 10 14 5.500C13.500 3.500 12 5 12.500 7C13.500 12 18 17 22.500 17.500C25 17.500 23.500 15 20 15C15 15 10 17 7 19.500C4.500 22 6 22 7.500 19.500" stroke="#fff" strokeWidth="1.500" />
      </svg>
      <svg width="32" height="32" viewBox="0 0 32 32" className="mt-[2px] ml-[32px]">
        <path d="M3 8L7 4L9 9L13 8L20 1L23 7L26 6L30 13C33 24 25 31 16 31C7 31 0 25 1 15Z" fill="#ff9a24" />
        <path d="M1 15C1 26 8 31 16 31C26 31 30 24 30.500 17C27 23 22 26 16 25C8 24 6 19 6 14Z" fill="#ed2f60" />
        <circle cx="16.500" cy="16" r="6.500" fill="#7352c8" />
        <path d="M20 1L22 7C27 10 28 17 24 22C30 18 31 12 27 7L25 8Z" fill="#ffdd45" />
        <path d="M7 12C10 10 13 11 17 13C14 14 13 16 9 15Z" fill="#ffc52e" />
      </svg>
      <TaskButton className="mt-px ml-[17px] from-[#9a93a2] via-[#4a3f56] to-[#5a5166]">
        <svg width="32" height="32" viewBox="0 0 32 32">
          <path d="M16 16L2.100 8A16 16 0 0 1 29.900 8Z" fill="#e33b2e" />
          <path d="M16 16L16 32A16 16 0 0 1 2.100 8Z" fill="#2da44e" />
          <path d="M22.500 19.500L16 32A16 16 0 0 0 29.900 8H16Z" fill="#fcc934" />
          <circle cx="16" cy="16" r="7.500" fill="#fff" />
          <circle cx="16" cy="16" r="6" fill="#3b86f0" />
        </svg>
      </TaskButton>
      <TaskButton className="mt-px ml-[4px] from-[#9a93a2] via-[#4a3f56] to-[#5a5166]">
        <svg width="32" height="30" viewBox="0 0 32 30">
          <path d="M1 5L3 2H12L13 4H30V26H1Z" fill="#e8c66e" />
          <path d="M5 1H9V3H5Z" fill="#3da04c" />
          <path d="M12 4H16V6H12Z" fill="#d83a2f" />
          <path d="M20 6H25V8H20Z" fill="#3d8fe0" />
          <path d="M1 8H32V27H1Z" fill="#f3dd98" />
          <path d="M1 8H32V10H1Z" fill="#fbf0c4" />
          <path d="M5 29V19Q5 16 8 16H26Q29 16 29 19V29H23V22H11V29Z" fill="#8ccbea" stroke="#d6effa" />
        </svg>
      </TaskButton>
      <TaskButton className="mt-px ml-[4px] from-[#dedbe1] via-[#8d8894] to-[#a5a1ab]">
        <svg width="31" height="30" viewBox="0 0 31 30">
          <path d="M16 3.500H29.500V26.500H16Z" fill="#fff" stroke="#217346" />
          <path d="M19 7H23M24.500 7H28M19 11H23M24.500 11H28M19 15H23M24.500 15H28M19 19H23M24.500 19H28M19 23H23M24.500 23H28" stroke="#217346" strokeWidth="2" />
          <path d="M0 3L18 0V30L0 27Z" fill="#1e7145" />
          <path d="M5 9L12 21M12 9L5 21" stroke="#fff" strokeWidth="2.600" />
        </svg>
      </TaskButton>
      <span className="mt-[11px] ml-[658px] w-[31px] text-[12px] leading-none">EN</span>
      <svg width="7" height="4" viewBox="0 0 7 4" className="mt-[18px] ml-[1px]">
        <path d="M0 4H7L3.500 0Z" fill="#fff" />
      </svg>
      <svg width="15" height="15" viewBox="0 0 15 15" className="mt-[12px] ml-[14px]" fill="none" stroke="#fff">
        <path d="M5.500 3.500H13.500V10.500H5.500M9.500 11V13M6 13.500H13" />
        <path d="M0.500 1V5.500H4.500V1M2.500 0V3M2.500 6V9.500H5" strokeWidth="1.300" />
      </svg>
      <svg width="16" height="14" viewBox="0 0 16 14" className="mt-[13px] ml-[8px]" fill="none" stroke="#fff">
        <path d="M0.500 4.500H3L6 1.500V12.500L3 9.500H0.500Z" fill="#fff" />
        <path d="M8 4.500Q9.500 7 8 9.500M10.500 3Q13 7 10.500 11M13 1.500Q16.500 7 13 12.500" />
      </svg>
      <div className="mt-[3px] ml-[18px] flex w-[60px] flex-col items-center text-[12px] leading-[17px] whitespace-nowrap">
        <span className="tracking-[-0.6px]">
          02:56 <span className="font-['DejaVu_Sans',sans-serif] text-[10px]">م</span>
        </span>
        <span className="font-['DejaVu_Sans',sans-serif] text-[11.500px]">٢٠٢٣/٠٧/٠٦</span>
      </div>
      <div className="ml-auto h-[39px] w-[13px] border border-[#8b8794] bg-linear-to-b from-[#7c7584] via-[#2a1e35] to-[#2a1e35]" />
    </div>
  );
}

function Watermark() {
  return (
    <svg width="160" height="80" viewBox="0 0 160 80" className="pointer-events-none absolute top-[930px] left-[560px] opacity-50" fill="#c4c4c4">
      <text
        x="80"
        y="37"
        direction="rtl"
        textAnchor="middle"
        textLength="150"
        lengthAdjust="spacingAndGlyphs"
        stroke="#c4c4c4"
        strokeWidth="2"
        strokeLinejoin="round"
        className="font-['DejaVu_Sans',sans-serif] text-[49px]"
      >
        مستقل
      </text>
      <text x="2" y="68" textLength="155" lengthAdjust="spacingAndGlyphs" className="font-['Liberation_Sans',sans-serif] text-[26px] font-bold">
        mostaql.com
      </text>
    </svg>
  );
}

export default function App() {
  return (
    <div className="relative h-[1024px] w-[1280px] overflow-hidden bg-white font-['Noto_Sans','Open_Sans',sans-serif]">
      <TitleBar />
      <RibbonTabs />
      <Ribbon />
      <FormulaBar />
      <Worksheet />
      <SheetTabs />
      <StatusBar />
      <Taskbar />
      <Watermark />
    </div>
  );
}
